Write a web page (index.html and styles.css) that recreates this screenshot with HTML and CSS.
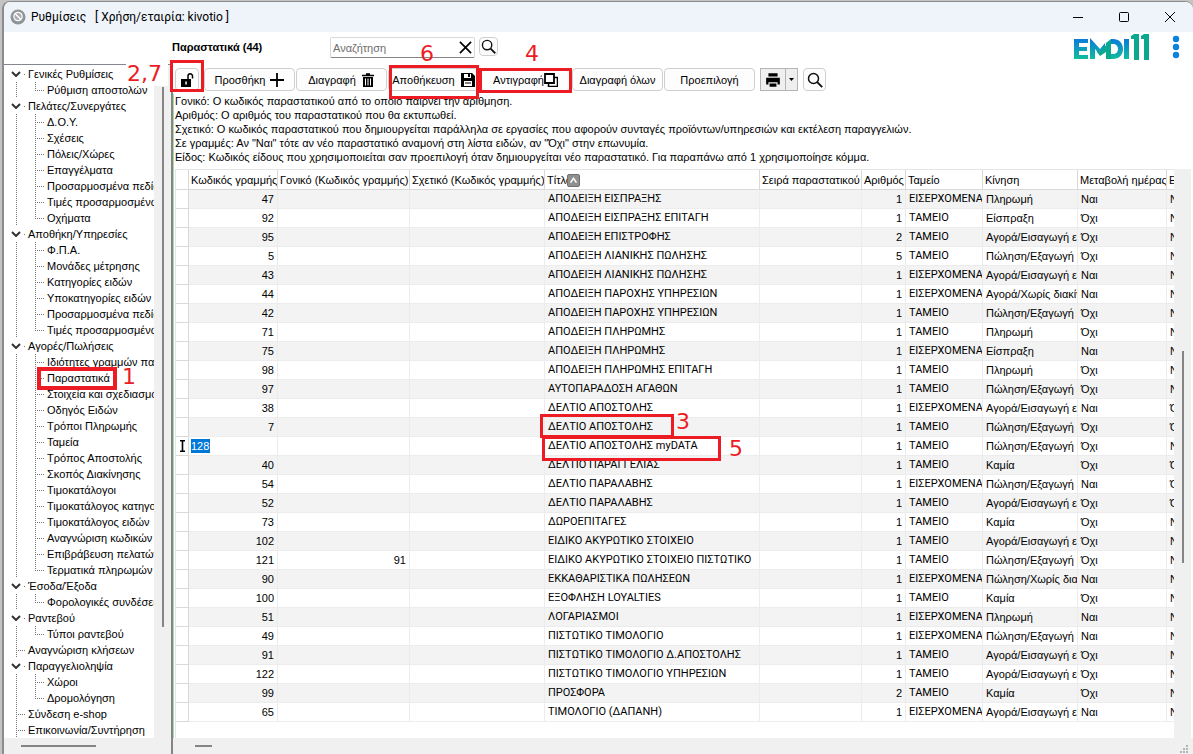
FILE: index.html
```html
<!DOCTYPE html>
<html lang="el">
<head>
<meta charset="utf-8">
<title>Ρυθμίσεις</title>
<link rel="stylesheet" href="styles.css">
</head>
<body>
<div class="window">
  <header class="titlebar">
    <svg class="app-icon" viewBox="0 0 16 16"><circle cx="8" cy="8" r="7.500" fill="#8f9496"/><circle cx="8" cy="7.500" r="4.200" fill="#a9adaf" stroke="#fff" stroke-width="1.200"/><path d="M5.500 5l5 5" stroke="#fff" stroke-width="1.500"/></svg>
    <h1 class="caption">Ρυθμίσεις &nbsp; [ Χρήση/εταιρία: kivotio ]</h1>
    <div class="controls">
      <button type="button" aria-label="Ελαχιστοποίηση"><svg viewBox="0 0 12 12"><path d="M1 6.500h10" stroke="#000"/></svg></button>
      <button type="button" aria-label="Μεγιστοποίηση"><svg viewBox="0 0 12 12"><rect x="1.500" y="1.500" width="9" height="9" rx="1" fill="none" stroke="#000"/></svg></button>
      <button type="button" aria-label="Κλείσιμο"><svg viewBox="0 0 12 12"><path d="M1 1l10 10M11 1L1 11" stroke="#000"/></svg></button>
    </div>
  </header>

  <div class="content">
    <nav class="sidebar" aria-label="Ρυθμίσεις">
      <div class="tree-view">
        <ul class="tree">
          <li class="group"><button type="button"><svg viewBox="0 0 10 6"><path d="M1 1l4 4 4-4"/></svg>Γενικές Ρυθμίσεις</button>
            <ul><li><a href="#">Ρύθμιση αποστολών</a></li></ul></li>
          <li class="group"><button type="button"><svg viewBox="0 0 10 6"><path d="M1 1l4 4 4-4"/></svg>Πελάτες/Συνεργάτες</button>
            <ul>
              <li><a href="#">Δ.Ο.Υ.</a></li>
              <li><a href="#">Σχέσεις</a></li>
              <li><a href="#">Πόλεις/Χώρες</a></li>
              <li><a href="#">Επαγγέλματα</a></li>
              <li><a href="#">Προσαρμοσμένα πεδία</a></li>
              <li><a href="#">Τιμές προσαρμοσμένων</a></li>
              <li><a href="#">Οχήματα</a></li>
            </ul></li>
          <li class="group"><button type="button"><svg viewBox="0 0 10 6"><path d="M1 1l4 4 4-4"/></svg>Αποθήκη/Υπηρεσίες</button>
            <ul>
              <li><a href="#">Φ.Π.Α.</a></li>
              <li><a href="#">Μονάδες μέτρησης</a></li>
              <li><a href="#">Κατηγορίες ειδών</a></li>
              <li><a href="#">Υποκατηγορίες ειδών</a></li>
              <li><a href="#">Προσαρμοσμένα πεδία</a></li>
              <li><a href="#">Τιμές προσαρμοσμένων</a></li>
            </ul></li>
          <li class="group"><button type="button"><svg viewBox="0 0 10 6"><path d="M1 1l4 4 4-4"/></svg>Αγορές/Πωλήσεις</button>
            <ul>
              <li><a href="#">Ιδιότητες γραμμών παραστατικών</a></li>
              <li><a href="#" aria-current="page">Παραστατικά</a></li>
              <li><a href="#">Στοιχεία και σχεδιασμός</a></li>
              <li><a href="#">Οδηγός Ειδών</a></li>
              <li><a href="#">Τρόποι Πληρωμής</a></li>
              <li><a href="#">Ταμεία</a></li>
              <li><a href="#">Τρόπος Αποστολής</a></li>
              <li><a href="#">Σκοπός Διακίνησης</a></li>
              <li><a href="#">Τιμοκατάλογοι</a></li>
              <li><a href="#">Τιμοκατάλογος κατηγοριών</a></li>
              <li><a href="#">Τιμοκατάλογος ειδών</a></li>
              <li><a href="#">Αναγνώριση κωδικών</a></li>
              <li><a href="#">Επιβράβευση πελατών</a></li>
              <li><a href="#">Τερματικά πληρωμών</a></li>
            </ul></li>
          <li class="group"><button type="button"><svg viewBox="0 0 10 6"><path d="M1 1l4 4 4-4"/></svg>Έσοδα/Έξοδα</button>
            <ul><li><a href="#">Φορολογικές συνδέσεις</a></li></ul></li>
          <li class="group"><button type="button"><svg viewBox="0 0 10 6"><path d="M1 1l4 4 4-4"/></svg>Ραντεβού</button>
            <ul><li><a href="#">Τύποι ραντεβού</a></li></ul></li>
          <li class="leaf"><a href="#">Αναγνώριση κλήσεων</a></li>
          <li class="group"><button type="button"><svg viewBox="0 0 10 6"><path d="M1 1l4 4 4-4"/></svg>Παραγγελιοληψία</button>
            <ul><li><a href="#">Χώροι</a></li><li><a href="#">Δρομολόγηση</a></li></ul></li>
          <li class="leaf"><a href="#">Σύνδεση e-shop</a></li>
          <li class="leaf"><a href="#">Επικοινωνία/Συντήρηση</a></li>
        </ul>
        <div class="vbar tree-vbar"><i></i></div>
      </div>
      <div class="hbar tree-hbar"><i></i></div>
    </nav>

    <main class="main">
      <div class="heading">
        <h2>Παραστατικά (44)</h2>
        <div class="search">
          <input type="text" placeholder="Αναζήτηση" aria-label="Αναζήτηση">
          <button type="button" aria-label="Καθαρισμός"><svg viewBox="0 0 14 14"><path d="M1 1l12 12M13 1L1 13" stroke="#000" stroke-width="1.800"/></svg></button>
        </div>
        <button type="button" class="tool find" aria-label="Εύρεση"><svg viewBox="0 0 16 16"><circle cx="6.500" cy="6.500" r="5" fill="none" stroke="#111" stroke-width="1.500"/><path d="M10.200 10.200l5 5" stroke="#111" stroke-width="1.900"/></svg></button>
        <div class="brand">
          <svg class="logo" viewBox="0 0 76 26" role="img" aria-label="EMDI11">
            <defs><linearGradient id="g" gradientUnits="userSpaceOnUse" x1="0" y1="4" x2="0" y2="25"><stop offset="0" stop-color="#0878de"/><stop offset="1" stop-color="#12bd9d"/></linearGradient></defs>
            <path fill="url(#g)" d="M1 5h14v4H6v4h8v4H6v4h9v4H1z"/>
            <path fill="url(#g)" d="M17 4l10 11 5-6v5l-5 7-5-6v10h-5z"/>
            <path fill="#0ba88f" d="M24 16l3 3 6-8v7l-6 4-3-4z"/>
            <path fill="url(#g)" d="M38 5h2c6 0 10 4 10 10s-4 10-10 10h-2v-5h2c3 0 5-2 5-5s-2-5-5-5h-2z"/>
            <path fill="#0ba88f" d="M38 5v20h-5V9z"/>
            <path fill="url(#g)" d="M51 5h5v20h-5z"/>
            <path fill="#0ba88f" d="M58 2l3-2h5v26h-5V5h-3zM68 2l3-2h5v26h-5V5h-3z"/>
          </svg>
          <button type="button" class="dots" aria-label="Μενού"><svg viewBox="0 0 8 24"><g fill="#0a82e0"><circle cx="4" cy="4" r="3.200"/><circle cx="4" cy="12" r="3.200"/><circle cx="4" cy="20" r="3.200"/></g></svg></button>
        </div>
      </div>

      <div class="toolbar">
        <button type="button" class="tool lock" aria-label="Ξεκλείδωμα"><svg viewBox="0 0 14 16"><path d="M1 7h10v8H1z"/><path d="M8 7V4a2.200 2.200 0 014.500 0v2.500" fill="none" stroke="#000" stroke-width="1.500"/><path d="M5.300 9.500h1.500v3H5.300z" fill="#fff"/></svg></button>
        <button type="button" class="tool wide">Προσθήκη<svg viewBox="0 0 14 14"><path d="M7 0v14M0 7h14" stroke="#000" stroke-width="1.800"/></svg></button>
        <button type="button" class="tool wide">Διαγραφή<svg viewBox="0 0 14 14"><path d="M1 2.500h12M5 1h4" stroke="#000" stroke-width="1.500"/><path d="M2 4h10v10H2z"/><path d="M4.500 5.500v7M7 5.500v7M9.500 5.500v7" stroke="#fff"/></svg></button>
        <button type="button" class="tool wide save">Αποθήκευση<svg viewBox="0 0 14 14"><path d="M0 0h11l3 3v11H0z"/><path d="M3 1h7v4H3zM3 8h8v5H3z" fill="#fff"/><path d="M7 1h2v3H7zM4 9.500h6v1H4z"/></svg></button>
        <button type="button" class="tool wide copy">Αντιγραφή<svg viewBox="0 0 14 14"><path d="M4.500 10.500v3h9v-9h-3" fill="none" stroke="#000" stroke-width="1.500"/><path d="M1 1h9v9H1z" fill="#fff" stroke="#000" stroke-width="1.800"/></svg></button>
        <button type="button" class="tool wide">Διαγραφή όλων</button>
        <button type="button" class="tool wide">Προεπιλογή</button>
        <div class="split">
          <button type="button" aria-label="Εκτύπωση"><svg viewBox="0 0 14 14"><path d="M3 1h8v3H3zM1 5h12v6h-2V9H3v2H1zM4 10h6v3H4z"/></svg></button>
          <button type="button" class="drop" aria-label="Επιλογές εκτύπωσης"><svg viewBox="0 0 5 3"><path d="M0 0h5L2.500 3z"/></svg></button>
        </div>
        <button type="button" class="tool lens" aria-label="Προεπισκόπηση"><svg viewBox="0 0 16 16"><circle cx="6.500" cy="6.500" r="5" fill="none" stroke="#111" stroke-width="1.500"/><path d="M10.200 10.200l5 5" stroke="#111" stroke-width="1.900"/></svg></button>
      </div>

      <div class="notes">
        <p>Γονικό: Ο κωδικός παραστατικού από το οποίο παίρνει την αρίθμηση.</p>
        <p>Αριθμός: Ο αριθμός του παραστατικού που θα εκτυπωθεί.</p>
        <p>Σχετικό: Ο κωδικός παραστατικού που δημιουργείται παράλληλα σε εργασίες που αφορούν συνταγές προϊόντων/υπηρεσιών και εκτέλεση παραγγελιών.</p>
        <p>Σε γραμμές: Αν "Ναι" τότε αν νέο παραστατικό αναμονή στη λίστα ειδών, αν "Όχι" στην επωνυμία.</p>
        <p>Είδος: Κωδικός είδους που χρησιμοποιείται σαν προεπιλογή όταν δημιουργείται νέο παραστατικό. Για παραπάνω από 1 χρησιμοποίησε κόμμα.</p>
      </div>

      <div class="grid-view">
        <div class="grid-scroll">
          <table>
            <colgroup><col class="c-sel"><col class="c-code"><col class="c-parent"><col class="c-rel"><col class="c-title"><col class="c-series"><col class="c-num"><col class="c-cash"><col class="c-move"><col class="c-day"><col></colgroup>
            <thead><tr><th></th><th>Κωδικός γραμμής</th><th>Γονικό (Κωδικός γραμμής)</th><th>Σχετικό (Κωδικός γραμμής)</th><th>Τίτλος<span class="sort"><svg viewBox="0 0 13 13"><path d="M3 9l3.500-5L10 9" fill="none" stroke="#fff" stroke-width="1.800"/></svg></span></th><th>Σειρά παραστατικού</th><th>Αριθμός</th><th>Ταμείο</th><th>Κίνηση</th><th>Μεταβολή ημέρας</th><th>Είδος</th></tr></thead>
            <tbody>
              <tr><td></td><td>47</td><td></td><td></td><td>ΑΠΟΔΕΙΞΗ ΕΙΣΠΡΑΞΗΣ</td><td></td><td>1</td><td>ΕΙΣΕΡΧΟΜΕΝΑ</td><td>Πληρωμή</td><td>Ναι</td><td>Ναι</td></tr>
              <tr><td></td><td>92</td><td></td><td></td><td>ΑΠΟΔΕΙΞΗ ΕΙΣΠΡΑΞΗΣ ΕΠΙΤΑΓΗ</td><td></td><td>1</td><td>ΤΑΜΕΙΟ</td><td>Είσπραξη</td><td>Όχι</td><td>Ναι</td></tr>
              <tr><td></td><td>95</td><td></td><td></td><td>ΑΠΟΔΕΙΞΗ ΕΠΙΣΤΡΟΦΗΣ</td><td></td><td>2</td><td>ΤΑΜΕΙΟ</td><td>Αγορά/Εισαγωγή ειδών</td><td>Όχι</td><td>Ναι</td></tr>
              <tr><td></td><td>5</td><td></td><td></td><td>ΑΠΟΔΕΙΞΗ ΛΙΑΝΙΚΗΣ ΠΩΛΗΣΗΣ</td><td></td><td>5</td><td>ΤΑΜΕΙΟ</td><td>Πώληση/Εξαγωγή ειδών</td><td>Όχι</td><td>Ναι</td></tr>
              <tr><td></td><td>43</td><td></td><td></td><td>ΑΠΟΔΕΙΞΗ ΛΙΑΝΙΚΗΣ ΠΩΛΗΣΗΣ</td><td></td><td>1</td><td>ΕΙΣΕΡΧΟΜΕΝΑ</td><td>Αγορά/Εισαγωγή ειδών</td><td>Ναι</td><td>Ναι</td></tr>
              <tr><td></td><td>44</td><td></td><td></td><td>ΑΠΟΔΕΙΞΗ ΠΑΡΟΧΗΣ ΥΠΗΡΕΣΙΩΝ</td><td></td><td>1</td><td>ΕΙΣΕΡΧΟΜΕΝΑ</td><td>Αγορά/Χωρίς διακίνηση</td><td>Ναι</td><td>Ναι</td></tr>
              <tr><td></td><td>42</td><td></td><td></td><td>ΑΠΟΔΕΙΞΗ ΠΑΡΟΧΗΣ ΥΠΗΡΕΣΙΩΝ</td><td></td><td>1</td><td>ΤΑΜΕΙΟ</td><td>Πώληση/Εξαγωγή ειδών</td><td>Όχι</td><td>Ναι</td></tr>
              <tr><td></td><td>71</td><td></td><td></td><td>ΑΠΟΔΕΙΞΗ ΠΛΗΡΩΜΗΣ</td><td></td><td>1</td><td>ΤΑΜΕΙΟ</td><td>Πληρωμή</td><td>Όχι</td><td>Ναι</td></tr>
              <tr><td></td><td>75</td><td></td><td></td><td>ΑΠΟΔΕΙΞΗ ΠΛΗΡΩΜΗΣ</td><td></td><td>1</td><td>ΕΙΣΕΡΧΟΜΕΝΑ</td><td>Είσπραξη</td><td>Ναι</td><td>Ναι</td></tr>
              <tr><td></td><td>98</td><td></td><td></td><td>ΑΠΟΔΕΙΞΗ ΠΛΗΡΩΜΗΣ ΕΠΙΤΑΓΗ</td><td></td><td>1</td><td>ΤΑΜΕΙΟ</td><td>Πληρωμή</td><td>Όχι</td><td>Ναι</td></tr>
              <tr><td></td><td>97</td><td></td><td></td><td>ΑΥΤΟΠΑΡΑΔΟΣΗ ΑΓΑΘΩΝ</td><td></td><td>1</td><td>ΤΑΜΕΙΟ</td><td>Πώληση/Εξαγωγή ειδών</td><td>Όχι</td><td>Ναι</td></tr>
              <tr><td></td><td>38</td><td></td><td></td><td>ΔΕΛΤΙΟ ΑΠΟΣΤΟΛΗΣ</td><td></td><td>1</td><td>ΕΙΣΕΡΧΟΜΕΝΑ</td><td>Αγορά/Εισαγωγή ειδών</td><td>Ναι</td><td>Όχι</td></tr>
              <tr><td></td><td>7</td><td></td><td></td><td>ΔΕΛΤΙΟ ΑΠΟΣΤΟΛΗΣ</td><td></td><td>1</td><td>ΤΑΜΕΙΟ</td><td>Πώληση/Εξαγωγή ειδών</td><td>Όχι</td><td>Όχι</td></tr>
              <tr class="editing"><td><svg class="caret" viewBox="0 0 5 12"><path d="M0 0h5v1.500H3.300v9H5V12H0v-1.500h1.700v-9H0z"/></svg></td><td><input type="text" value="128" aria-label="Κωδικός γραμμής"></td><td></td><td></td><td>ΔΕΛΤΙΟ ΑΠΟΣΤΟΛΗΣ myDATA</td><td></td><td>1</td><td>ΤΑΜΕΙΟ</td><td>Πώληση/Εξαγωγή ειδών</td><td>Όχι</td><td>Ναι</td></tr>
              <tr><td></td><td>40</td><td></td><td></td><td>ΔΕΛΤΙΟ ΠΑΡΑΓΓΕΛΙΑΣ</td><td></td><td>1</td><td>ΤΑΜΕΙΟ</td><td>Καμία</td><td>Όχι</td><td>Όχι</td></tr>
              <tr><td></td><td>54</td><td></td><td></td><td>ΔΕΛΤΙΟ ΠΑΡΑΛΑΒΗΣ</td><td></td><td>1</td><td>ΕΙΣΕΡΧΟΜΕΝΑ</td><td>Πώληση/Εξαγωγή ειδών</td><td>Ναι</td><td>Όχι</td></tr>
              <tr><td></td><td>52</td><td></td><td></td><td>ΔΕΛΤΙΟ ΠΑΡΑΛΑΒΗΣ</td><td></td><td>1</td><td>ΤΑΜΕΙΟ</td><td>Αγορά/Εισαγωγή ειδών</td><td>Όχι</td><td>Όχι</td></tr>
              <tr><td></td><td>73</td><td></td><td></td><td>ΔΩΡΟΕΠΙΤΑΓΕΣ</td><td></td><td>1</td><td>ΤΑΜΕΙΟ</td><td>Καμία</td><td>Όχι</td><td>Ναι</td></tr>
              <tr><td></td><td>102</td><td></td><td></td><td>ΕΙΔΙΚΟ ΑΚΥΡΩΤΙΚΟ ΣΤΟΙΧΕΙΟ</td><td></td><td>1</td><td>ΤΑΜΕΙΟ</td><td>Αγορά/Εισαγωγή ειδών</td><td>Όχι</td><td>Ναι</td></tr>
              <tr><td></td><td>121</td><td>91</td><td></td><td>ΕΙΔΙΚΟ ΑΚΥΡΩΤΙΚΟ ΣΤΟΙΧΕΙΟ ΠΙΣΤΩΤΙΚΟ</td><td></td><td>1</td><td>ΤΑΜΕΙΟ</td><td>Πώληση/Εξαγωγή ειδών</td><td>Όχι</td><td>Ναι</td></tr>
              <tr><td></td><td>90</td><td></td><td></td><td>ΕΚΚΑΘΑΡΙΣΤΙΚΑ ΠΩΛΗΣΕΩΝ</td><td></td><td>1</td><td>ΕΙΣΕΡΧΟΜΕΝΑ</td><td>Πώληση/Χωρίς διακίνηση</td><td>Ναι</td><td>Ναι</td></tr>
              <tr><td></td><td>100</td><td></td><td></td><td>ΕΞΟΦΛΗΣΗ LOYALTIES</td><td></td><td>1</td><td>ΤΑΜΕΙΟ</td><td>Καμία</td><td>Όχι</td><td>Ναι</td></tr>
              <tr><td></td><td>51</td><td></td><td></td><td>ΛΟΓΑΡΙΑΣΜΟΙ</td><td></td><td>1</td><td>ΕΙΣΕΡΧΟΜΕΝΑ</td><td>Πληρωμή</td><td>Ναι</td><td>Ναι</td></tr>
              <tr><td></td><td>49</td><td></td><td></td><td>ΠΙΣΤΩΤΙΚΟ ΤΙΜΟΛΟΓΙΟ</td><td></td><td>1</td><td>ΕΙΣΕΡΧΟΜΕΝΑ</td><td>Πώληση/Εξαγωγή ειδών</td><td>Ναι</td><td>Ναι</td></tr>
              <tr><td></td><td>91</td><td></td><td></td><td>ΠΙΣΤΩΤΙΚΟ ΤΙΜΟΛΟΓΙΟ Δ.ΑΠΟΣΤΟΛΗΣ</td><td></td><td>1</td><td>ΤΑΜΕΙΟ</td><td>Αγορά/Εισαγωγή ειδών</td><td>Όχι</td><td>Ναι</td></tr>
              <tr><td></td><td>122</td><td></td><td></td><td>ΠΙΣΤΩΤΙΚΟ ΤΙΜΟΛΟΓΙΟ ΥΠΗΡΕΣΙΩΝ</td><td></td><td>1</td><td>ΤΑΜΕΙΟ</td><td>Αγορά/Εισαγωγή ειδών</td><td>Όχι</td><td>Ναι</td></tr>
              <tr><td></td><td>99</td><td></td><td></td><td>ΠΡΟΣΦΟΡΑ</td><td></td><td>2</td><td>ΤΑΜΕΙΟ</td><td>Καμία</td><td>Όχι</td><td>Ναι</td></tr>
              <tr><td></td><td>65</td><td></td><td></td><td>ΤΙΜΟΛΟΓΙΟ (ΔΑΠΑΝΗ)</td><td></td><td>1</td><td>ΕΙΣΕΡΧΟΜΕΝΑ</td><td>Αγορά/Εισαγωγή ειδών</td><td>Ναι</td><td>Ναι</td></tr>
            </tbody>
          </table>
        </div>
        <div class="vbar grid-vbar"><i></i></div>
      </div>
      <div class="hbar grid-hbar"><i></i><svg class="grip" viewBox="0 0 9 9"><path fill="#b5b5b5" d="M6 0h2v2H6zM3 3h2v2H3zM6 3h2v2H6zM0 6h2v2H0zM3 6h2v2H3zM6 6h2v2H6z"/></svg></div>
    </main>
  </div>
</div>

<div class="box box-lock"></div>
<div class="box box-save"></div>
<div class="box box-copy"></div>
<div class="box box-menu"></div>
<div class="box box-source"></div>
<div class="box box-result"></div>
<span class="step step-lock">2,7</span>
<span class="step step-menu">1</span>
<span class="step step-source">3</span>
<span class="step step-copy">4</span>
<span class="step step-result">5</span>
<span class="step step-save">6</span>
</body>
</html>
```
FILE: styles.css
```css
* { box-sizing: border-box; }
html, body { height: 100%; }
body {
  margin: 0;
  padding: 1px 0 0 2px;
  background: #c4c4c4;
  color: #000;
  font: 11px/14px "Liberation Sans", Arial, sans-serif;
  overflow: hidden;
}
button, input { font: inherit; color: inherit; }
button { padding: 0; border: 0; background: none; }
ul { list-style: none; margin: 0; padding: 0; }
a { color: inherit; text-decoration: none; }
h1, h2, p { margin: 0; font: inherit; }
svg { display: block; }

.window {
  height: 100%;
  display: flex;
  flex-direction: column;
  background: #fff;
  border: solid #8c8c8c;
  border-width: 1px 0 0 2px;
  border-radius: 8px 8px 0 0;
  overflow: hidden;
}
.titlebar {
  flex: none;
  height: 30px;
  display: flex;
  align-items: center;
  background: #eff3fa;
  padding-left: 6px;
}
.app-icon { width: 16px; height: 16px; }
.caption { margin-left: 5px; font: 12px/16px Roboto, "Noto Sans", sans-serif; }
.controls { margin-left: auto; display: flex; }
.controls button { width: 46px; height: 30px; display: grid; place-items: center; }
.controls svg { width: 12px; height: 12px; }

.content { flex: 1; min-height: 0; display: flex; }

.sidebar {
  flex: none;
  width: 167px;
  padding-top: 32px;
  display: flex;
  flex-direction: column;
}
.tree-view {
  flex: 1;
  min-height: 0;
  display: flex;
  border-top: 1px solid #828790;
  overflow: hidden;
}
.tree { flex: 1; min-width: 0; overflow: hidden; padding-top: 1px; white-space: nowrap; }
.tree button, .tree a { display: flex; align-items: center; height: 16px; width: 100%; line-height: 16px; }
.tree svg { flex: none; width: 10px; height: 6px; margin: 0 7px; fill: none; stroke: #333; stroke-width: 2; }
.group > button { background: linear-gradient(#777, #777) 20px 8px / 1px 1px no-repeat; }
.group li {
  padding-left: 43px;
  background:
    repeating-linear-gradient(#777 0 1px, transparent 1px 2px) 12px 0 / 1px 100% no-repeat,
    repeating-linear-gradient(#777 0 1px, transparent 1px 2px) 31px 0 / 1px 100% no-repeat,
    repeating-linear-gradient(90deg, #777 0 1px, transparent 1px 2px) 31px 8px / 9px 1px no-repeat;
}
.group li:last-child { background-size: 1px 100%, 1px 9px, 9px 1px; }
.leaf {
  padding-left: 24px;
  background:
    repeating-linear-gradient(#777 0 1px, transparent 1px 2px) 12px 0 / 1px 100% no-repeat,
    repeating-linear-gradient(90deg, #777 0 1px, transparent 1px 2px) 12px 8px / 9px 1px no-repeat;
}

.vbar { flex: none; width: 17px; background: #f0f0f0; }
.vbar i { display: block; width: 2px; margin: 0 auto; background: #858585; }
.tree-vbar i { height: 540px; margin-top: 22px; }
.hbar { flex: none; height: 16px; background: #f0f0f0; display: flex; align-items: center; }
.hbar i { height: 2px; background: #858585; }
.tree-hbar i { width: 75px; margin-left: 17px; }

.main { flex: 1; min-width: 0; display: flex; flex-direction: column; }
.heading { flex: none; height: 33px; display: flex; align-items: flex-start; padding: 5px 13px 0 1px; }
.heading h2 { width: 158px; font-weight: bold; line-height: 20px; }
.search {
  width: 145px;
  height: 21px;
  display: flex;
  border: 1px solid #d9d9d9;
  border-bottom-color: #868686;
  border-radius: 2px;
}
.search input { flex: 1; min-width: 0; border: 0; outline: 0; padding: 0 2px; background: none; }
.search input::placeholder { color: #6d6d6d; opacity: 1; }
.search button { width: 18px; display: grid; place-items: center; }
.search svg { width: 13px; height: 13px; }
.tool {
  flex: none;
  height: 23px;
  display: flex;
  align-items: center;
  justify-content: center;
  background: #fdfdfd;
  border: 1px solid #cfcfcf;
  border-radius: 4px;
  white-space: nowrap;
}
.tool svg { width: 14px; height: 14px; flex: none; }
.find { width: 19px; height: 19px; margin-left: 4px; }
.find svg { width: 15px; height: 15px; }
.brand { margin-left: auto; display: flex; margin-top: -3px; }
.logo { width: 76px; height: 26px; }
.dots { margin-left: 23px; }
.dots svg { width: 8px; height: 26px; }

.toolbar {
  flex: none;
  display: flex;
  gap: 1px;
  align-items: center;
  height: 29px;
  padding: 2px 0 2px 2px;
  border-left: 2px solid #858585;
}
.lock { width: 24px; margin-right: 4px; }
.lock svg { height: 16px; }
.wide { width: 91px; gap: 5px; }
.save { gap: 6px; }
.copy { gap: 0; }
.split { height: 23px; display: flex; margin: 0 4px; border: 1px solid #b5b5b5; background: #efefef; }
.split button { width: 24px; display: grid; place-items: center; }
.split button svg { width: 16px; height: 16px; }
.split .drop { width: 12px; border-left: 1px solid #b5b5b5; }
.split .drop svg { width: 5px; height: 3px; }
.lens { width: 23px; }
.lens svg { width: 16px; height: 16px; }

.notes {
  flex: none;
  padding: 0 0 5px 2px;
  border-left: 2px solid #858585;
  white-space: nowrap;
  overflow: hidden;
  box-shadow: inset 1px 0 #a5dca5;
}
.grid-view {
  flex: 1;
  min-height: 0;
  display: flex;
  border-left: 2px solid #858585;
  box-shadow: inset 1px 0 #a5dca5;
  padding: 0 2px;
}
.grid-scroll { flex: 1; min-width: 0; overflow: hidden; border-top: 1px solid #e5e5e5; border-left: 1px solid #e5e5e5; }
table { width: 100%; table-layout: fixed; border-collapse: separate; border-spacing: 0; }
.c-sel { width: 13px; }
.c-code { width: 89px; }
.c-parent { width: 132px; }
.c-rel { width: 135px; }
.c-title { width: 215px; }
.c-series { width: 102px; }
.c-num { width: 44px; }
.c-cash { width: 77px; }
.c-move { width: 95px; }
.c-day { width: 89px; }
th, td {
  height: 19px;
  padding: 0 3px;
  border: solid #ececec;
  border-width: 0 1px 1px 0;
  overflow: hidden;
  white-space: nowrap;
  text-align: left;
  font-weight: normal;
  line-height: 18px;
}
th { height: 20px; padding: 0 0 0 2px; border-color: #d9d9d9; }
th:nth-child(5) { position: relative; }
th:last-child, td:last-child { border-right: 0; }
td:first-child { padding: 0; border-color: #d9d9d9; }
td:nth-child(2), td:nth-child(3), td:nth-child(7) { text-align: right; }
td:nth-child(5), td:nth-child(8) { font-family: Roboto, "Liberation Sans", sans-serif; }
tbody tr:nth-child(odd) td:not(:first-child) { background: #f3f3f3; }
.sort { position: absolute; left: 22px; top: 4px; background: #909090; border: 1px solid #707070; border-radius: 2px; }
.sort svg { width: 11px; height: 11px; }
.caret { width: 5px; height: 12px; margin: 0 auto; }
.editing td:nth-child(2) { text-align: left; padding-left: 2px; }
.editing input {
  display: block;
  width: 19px;
  height: 14px;
  padding: 0;
  border: 0;
  background: #0078d7;
  color: #fff;
}
.grid-vbar i { height: 212px; margin-top: 182px; }
.grid-hbar { border-left: 2px solid #858585; justify-content: space-between; padding: 0 4px 0 22px; }
.grid-hbar i { width: 17px; }
.grip { width: 9px; height: 9px; align-self: flex-end; }

.box { position: absolute; border: 3px solid #ed1c24; pointer-events: none; }
.box-lock { left: 170px; top: 60px; width: 34px; height: 32px; }
.box-save { left: 389px; top: 65px; width: 90px; height: 34px; }
.box-copy { left: 479px; top: 68px; width: 93px; height: 25px; }
.box-menu { left: 37px; top: 367px; width: 80px; height: 23px; border-width: 4px; }
.box-source { left: 540px; top: 414px; width: 134px; height: 24px; }
.box-result { left: 542px; top: 436px; width: 179px; height: 25px; }
.step { position: absolute; color: #ed1c24; font: 22px/24px "DejaVu Sans", Verdana, sans-serif; pointer-events: none; }
.step-lock { left: 126px; top: 62px; width: 42px; padding-left: 1px; background: #fff; }
.step-menu { left: 122px; top: 365px; }
.step-source { left: 676px; top: 410px; }
.step-copy { left: 525px; top: 42px; }
.step-result { left: 729px; top: 437px; }
.step-save { left: 420px; top: 42px; }
```
